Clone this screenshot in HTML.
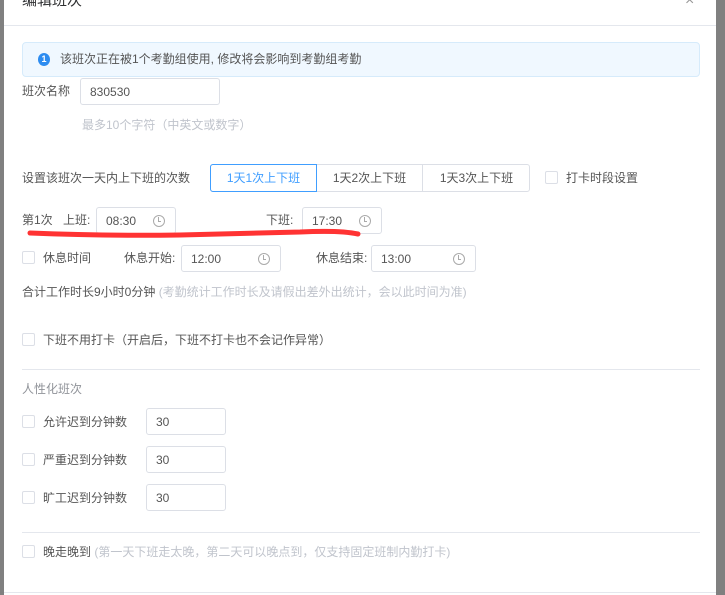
<!DOCTYPE html>
<html><head><meta charset="utf-8"><style>
*{margin:0;padding:0;box-sizing:border-box}
body{width:725px;height:595px;overflow:hidden;background:#808080;font-family:"Liberation Sans","Noto Sans CJK SC",sans-serif;font-size:12px;color:#555;position:relative}
.modal{position:absolute;left:4px;top:0;width:712px;height:595px;background:#fff}
.a{position:absolute;white-space:nowrap;line-height:14px}
.inp{position:absolute;border:1px solid #dcdfe6;border-radius:3px;background:#fff;padding-left:9px;font-size:12px;color:#555;display:flex;align-items:center}
.clk{position:absolute;right:10px;top:50%;margin-top:-6px;width:12px;height:12px;border:1px solid #aaa;border-radius:50%}
.clk:after{content:"";position:absolute;left:4px;top:1px;width:2px;height:4px;border-left:1px solid #aaa;border-bottom:1px solid #aaa}
.cb{position:absolute;width:13px;height:13px;border:1px solid #dcdfe6;border-radius:2px;background:#fff}
.line{position:absolute;left:18px;width:678px;height:1px;background:#e4e7ed}
.g{color:#c0c4cc}
</style></head><body>
<div class="modal">
<div class="a" style="left:18px;top:-6px;font-size:15px;color:#303133">编辑班次</div>
<div class="a" style="left:681px;top:-6px;font-size:16px;color:#999">×</div>
<div style="position:absolute;left:0;top:25px;width:712px;height:1px;background:#e4e7ed"></div>
<div style="position:absolute;left:18px;top:42px;width:678px;height:35px;background:#f0f8ff;border:1px solid #d6ebfb;border-radius:4px"></div>
<div style="position:absolute;left:34px;top:53px;width:12px;height:13px;border-radius:50%;background:#2d8cf0;color:#fff;font-size:9px;text-align:center;line-height:13px;font-weight:bold">1</div>
<div class="a" style="left:56px;top:52px">该班次正在被1个考勤组使用, 修改将会影响到考勤组考勤</div>
<div class="a" style="left:18px;top:84px">班次名称</div>
<div class="inp" style="left:76px;top:78px;width:140px;height:27px">830530</div>
<div class="a g" style="left:78px;top:118px">最多10个字符（中英文或数字）</div>

<div class="a" style="left:18px;top:171px">设置该班次一天内上下班的次数</div>
<div style="position:absolute;left:206px;top:164px;width:320px;height:28px;border:1px solid #dcdfe6;border-radius:3px"></div>
<div style="position:absolute;left:206px;top:164px;width:107px;height:28px;border:1px solid #409eff;border-radius:3px 0 0 3px;color:#409eff;text-align:center;line-height:26px">1天1次上下班</div>
<div style="position:absolute;left:313px;top:164px;width:106px;height:28px;border-right:1px solid #dcdfe6;text-align:center;line-height:28px">1天2次上下班</div>
<div style="position:absolute;left:419px;top:164px;width:107px;height:28px;text-align:center;line-height:28px">1天3次上下班</div>
<div class="cb" style="left:541px;top:171px"></div>
<div class="a" style="left:562px;top:171px">打卡时段设置</div>

<div class="a" style="left:18px;top:213px">第1次</div>
<div class="a" style="left:59px;top:213px">上班:</div>
<div class="inp" style="left:92px;top:207px;width:80px;height:27px">08:30<span class="clk"></span></div>
<div class="a" style="left:262px;top:213px">下班:</div>
<div class="inp" style="left:298px;top:207px;width:80px;height:27px">17:30<span class="clk"></span></div>

<div class="cb" style="left:18px;top:251px"></div>
<div class="a" style="left:39px;top:251px">休息时间</div>
<div class="a" style="left:120px;top:251px">休息开始:</div>
<div class="inp" style="left:177px;top:245px;width:100px;height:27px">12:00<span class="clk"></span></div>
<div class="a" style="left:312px;top:251px">休息结束:</div>
<div class="inp" style="left:367px;top:245px;width:105px;height:27px">13:00<span class="clk"></span></div>

<div class="a" style="left:18px;top:285px">合计工作时长9小时0分钟 <span class="g">(考勤统计工作时长及请假出差外出统计，会以此时间为准)</span></div>
<div class="cb" style="left:18px;top:333px"></div>
<div class="a" style="left:39px;top:333px">下班不用打卡（开启后，下班不打卡也不会记作异常）</div>
<div class="line" style="top:369px"></div>
<div class="a" style="left:18px;top:382px;color:#909399">人性化班次</div>

<div class="cb" style="left:18px;top:415px"></div>
<div class="a" style="left:39px;top:415px">允许迟到分钟数</div>
<div class="inp" style="left:142px;top:408px;width:80px;height:27px">30</div>
<div class="cb" style="left:18px;top:453px"></div>
<div class="a" style="left:39px;top:453px">严重迟到分钟数</div>
<div class="inp" style="left:142px;top:446px;width:80px;height:27px">30</div>
<div class="cb" style="left:18px;top:491px"></div>
<div class="a" style="left:39px;top:491px">旷工迟到分钟数</div>
<div class="inp" style="left:142px;top:484px;width:80px;height:27px">30</div>
<div class="line" style="top:532px"></div>
<div class="cb" style="left:18px;top:545px"></div>
<div class="a" style="left:39px;top:545px">晚走晚到 <span class="g">(第一天下班走太晚，第二天可以晚点到，仅支持固定班制内勤打卡)</span></div>
<div style="position:absolute;left:0;top:592px;width:712px;height:1px;background:#e4e7ed"></div>
</div>
<svg style="position:absolute;left:0;top:0" width="725" height="595"><path d="M30 233 Q100 236 180 235 Q260 233 300 232 Q340 230 358 234" stroke="#f33" stroke-width="5" fill="none" stroke-linecap="round"/></svg>
</body></html>
